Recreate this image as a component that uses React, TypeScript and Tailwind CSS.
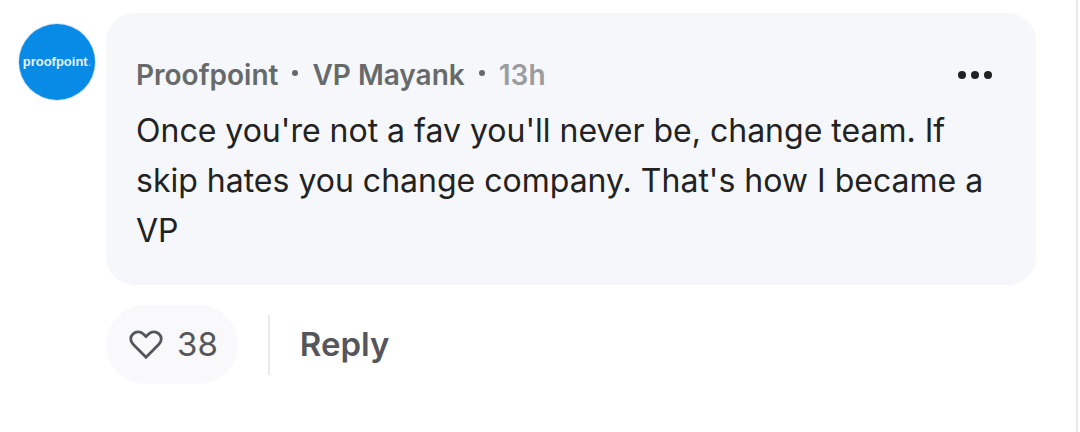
import React, { useState } from "react";

const comment = {
  company: "Proofpoint",
  author: "VP Mayank",
  age: "13h",
  text: "Once you're not a fav you'll never be, change team. If skip hates you change company. That's how I became a VP",
  likes: 38,
};

const Avatar = () => (
  <div className="mt-[11px] flex h-[76px] w-[76px] shrink-0 items-center justify-center rounded-full bg-[#078be6] ring-1 ring-[#dbe6f0]">
    <span className="font-['Liberation_Sans',sans-serif] text-[13px] leading-4 font-bold text-[#e6f3fd]">
      proofpoint<span className="font-normal opacity-60">.</span>
    </span>
  </div>
);

const Dot = () => (
  <span className="mx-[14px] mb-1 h-[6px] w-[6px] rounded-full bg-[#666a6b]" />
);

const HeartIcon = () => (
  <svg
    viewBox="0 0 34 30"
    className="h-[30px] w-[34px]"
    fill="none"
    stroke="currentColor"
    strokeWidth="2.8"
    strokeLinejoin="miter"
    aria-hidden="true">
    <path d="M17 27.2 4.1 14.2C1 11 1 6.700 4.100 3.900 7.300 1 11.800 1.400 14.600 4.200L17 6.600l2.400-2.400c2.800-2.800 7.300-3.200 10.500-.3 3.100 2.800 3.100 7.100 0 10.300L17 27.200Z" />
  </svg>
);

const Comment = () => {
  const [liked, setLiked] = useState(false);

  return (
    <article className="flex items-start gap-[11px] pt-[13px] pr-10 pb-12 pl-[19px]">
      <Avatar />
      <div className="min-w-0 flex-1">
        <div className="rounded-[28px] bg-[#f5f7fb] px-[30px] pt-[31px] pb-[29px]">
          <header className="flex h-[62px] items-center text-[28px] font-semibold text-[#666a6b]">
            <span>{comment.company}</span>
            <Dot />
            <span>{comment.author}</span>
            <Dot />
            <time className="text-[#9b9c9f]">{comment.age}</time>
            <button
              type="button"
              aria-label="More options"
              className="ml-auto flex h-10 items-center gap-[5px] px-[14px]">
              <span className="h-2 w-2 rounded-full bg-[#222222]" />
              <span className="h-2 w-2 rounded-full bg-[#222222]" />
              <span className="h-2 w-2 rounded-full bg-[#222222]" />
            </button>
          </header>
          <p className="text-[32px] leading-[50px] text-[#222222]">
            {comment.text}
          </p>
        </div>

        <div className="mt-5 flex items-center text-[33px] text-[#55565b]">
          <button
            type="button"
            aria-pressed={liked}
            onClick={() => setLiked(!liked)}
            className="flex h-[79px] items-center gap-[14px] rounded-full bg-[#f9f9fc] pr-5 pl-[23px]">
            <HeartIcon />
            <span>{comment.likes + (liked ? 1 : 0)}</span>
          </button>
          <div className="mx-[30px] h-[60px] w-[2px] bg-[#eaeaea]" />
          <button type="button" className="font-semibold">
            Reply
          </button>
        </div>
      </div>
    </article>
  );
};

export default function App() {
  return (
    <main className="min-h-screen bg-white pr-[2px] font-[Inter,sans-serif]">
      <div className="min-h-screen border-r-2 border-[#e8e8e8]">
        <Comment />
      </div>
    </main>
  );
}
